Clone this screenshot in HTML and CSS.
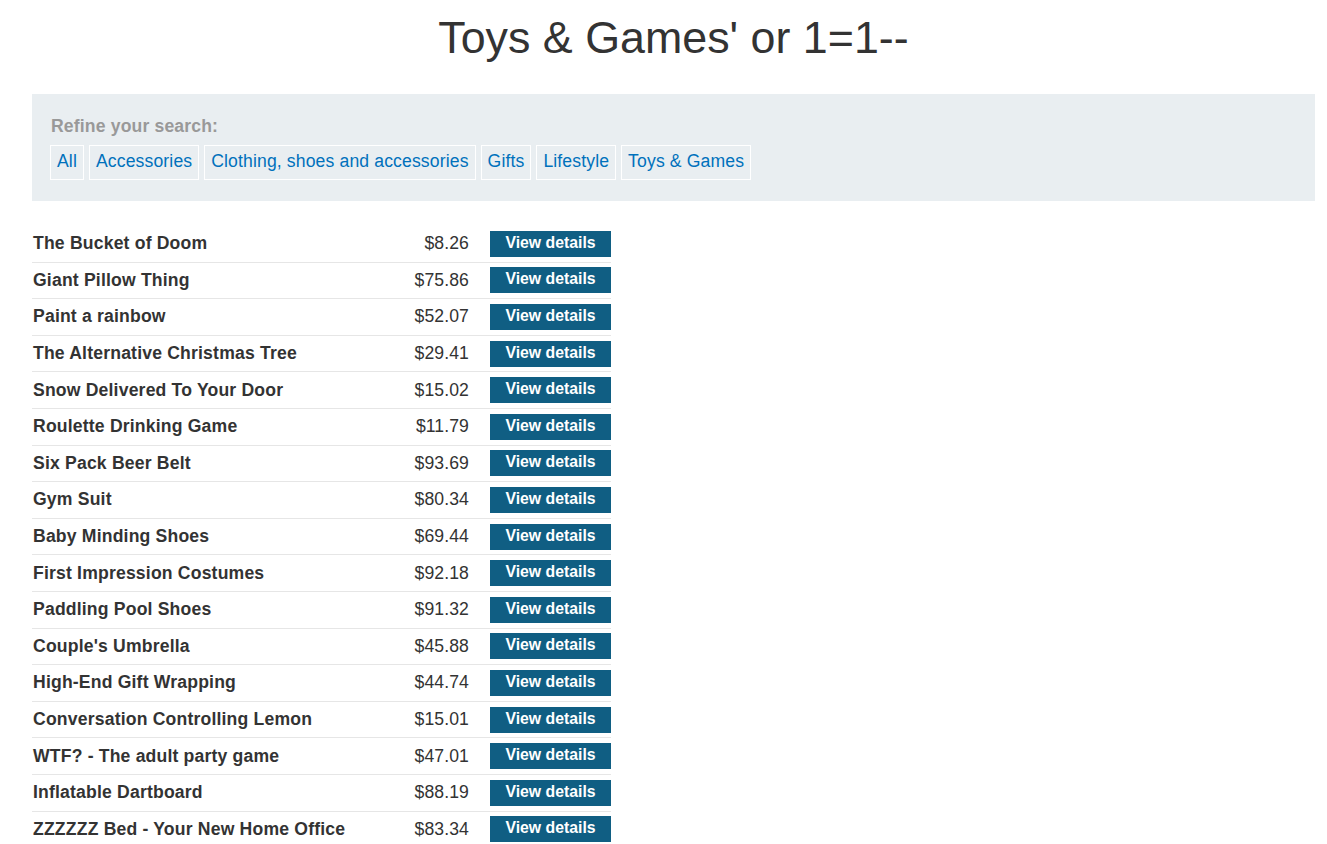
FILE: index.html
```html
<!DOCTYPE html>
<html lang="en">
<head>
<meta charset="utf-8">
<title>Toys &amp; Games' or 1=1--</title>
<link rel="stylesheet" href="styles.css">
</head>
<body>
<div class="container">
  <h1 class="title">Toys &amp; Games' or 1=1--</h1>
  <section class="filters">
    <div class="filters-label">Refine your search:</div>
    <div class="filters-list">
      <a class="filter" href="#">All</a>
      <a class="filter" href="#">Accessories</a>
      <a class="filter" href="#">Clothing, shoes and accessories</a>
      <a class="filter" href="#">Gifts</a>
      <a class="filter" href="#">Lifestyle</a>
      <a class="filter" href="#">Toys &amp; Games</a>
    </div>
  </section>
  <div class="products">
    <div class="row"><span class="name">The Bucket of Doom</span><span class="price">$8.26</span><a class="btn" href="#">View details</a></div>
    <div class="row"><span class="name">Giant Pillow Thing</span><span class="price">$75.86</span><a class="btn" href="#">View details</a></div>
    <div class="row"><span class="name">Paint a rainbow</span><span class="price">$52.07</span><a class="btn" href="#">View details</a></div>
    <div class="row"><span class="name">The Alternative Christmas Tree</span><span class="price">$29.41</span><a class="btn" href="#">View details</a></div>
    <div class="row"><span class="name">Snow Delivered To Your Door</span><span class="price">$15.02</span><a class="btn" href="#">View details</a></div>
    <div class="row"><span class="name">Roulette Drinking Game</span><span class="price">$11.79</span><a class="btn" href="#">View details</a></div>
    <div class="row"><span class="name">Six Pack Beer Belt</span><span class="price">$93.69</span><a class="btn" href="#">View details</a></div>
    <div class="row"><span class="name">Gym Suit</span><span class="price">$80.34</span><a class="btn" href="#">View details</a></div>
    <div class="row"><span class="name">Baby Minding Shoes</span><span class="price">$69.44</span><a class="btn" href="#">View details</a></div>
    <div class="row"><span class="name">First Impression Costumes</span><span class="price">$92.18</span><a class="btn" href="#">View details</a></div>
    <div class="row"><span class="name">Paddling Pool Shoes</span><span class="price">$91.32</span><a class="btn" href="#">View details</a></div>
    <div class="row"><span class="name">Couple's Umbrella</span><span class="price">$45.88</span><a class="btn" href="#">View details</a></div>
    <div class="row"><span class="name">High-End Gift Wrapping</span><span class="price">$44.74</span><a class="btn" href="#">View details</a></div>
    <div class="row"><span class="name">Conversation Controlling Lemon</span><span class="price">$15.01</span><a class="btn" href="#">View details</a></div>
    <div class="row"><span class="name">WTF? - The adult party game</span><span class="price">$47.01</span><a class="btn" href="#">View details</a></div>
    <div class="row"><span class="name">Inflatable Dartboard</span><span class="price">$88.19</span><a class="btn" href="#">View details</a></div>
    <div class="row"><span class="name">ZZZZZZ Bed - Your New Home Office</span><span class="price">$83.34</span><a class="btn" href="#">View details</a></div>
  </div>
</div>
</body>
</html>
```

FILE: styles.css
```css
html, body {
  margin: 0;
  padding: 0;
  background: #fff;
}
body {
  font-family: "Liberation Sans", Arial, sans-serif;
  font-size: 17.6px;
  color: #333;
}
.container {
  padding: 0 12px 0 32px;
}
.title {
  margin: 12px 0 31px;
  font-size: 44.8px;
  font-weight: normal;
  line-height: normal;
  text-align: center;
  color: #333;
}
.filters {
  background: #e9eef1;
  padding: 22px 18px 21px;
}
.filters-label {
  font-weight: bold;
  color: #999;
  line-height: normal;
  letter-spacing: 0.15px;
  margin: 0 0 8px 1px;
}
.filters-list {
  display: flex;
  flex-wrap: wrap;
  gap: 5px;
}
.filter {
  display: block;
  border: 1px solid #fff;
  padding: 5px 6px 7px;
  line-height: 21px;
  letter-spacing: 0.13px;
  color: #0071bc;
  text-decoration: none;
}
.products {
  margin-top: 25px;
  width: 579px;
}
.row {
  display: grid;
  grid-template-columns: 1fr 100px 121px;
  align-items: center;
  height: 36.6px;
  box-sizing: border-box;
  border-bottom: 1px solid #e6e6e6;
}
.name {
  font-weight: bold;
  padding-left: 1px;
  letter-spacing: 0.18px;
  color: #333;
}
.price {
  text-align: right;
  padding-right: 21px;
  letter-spacing: 0.1px;
  color: #333;
}
.btn {
  display: block;
  height: 26px;
  box-sizing: border-box;
  padding: 0 0 2px;
  line-height: 24px;
  background: #105e83;
  color: #fff;
  font-weight: bold;
  font-size: 15.8px;
  text-align: center;
  text-decoration: none;
}
```
